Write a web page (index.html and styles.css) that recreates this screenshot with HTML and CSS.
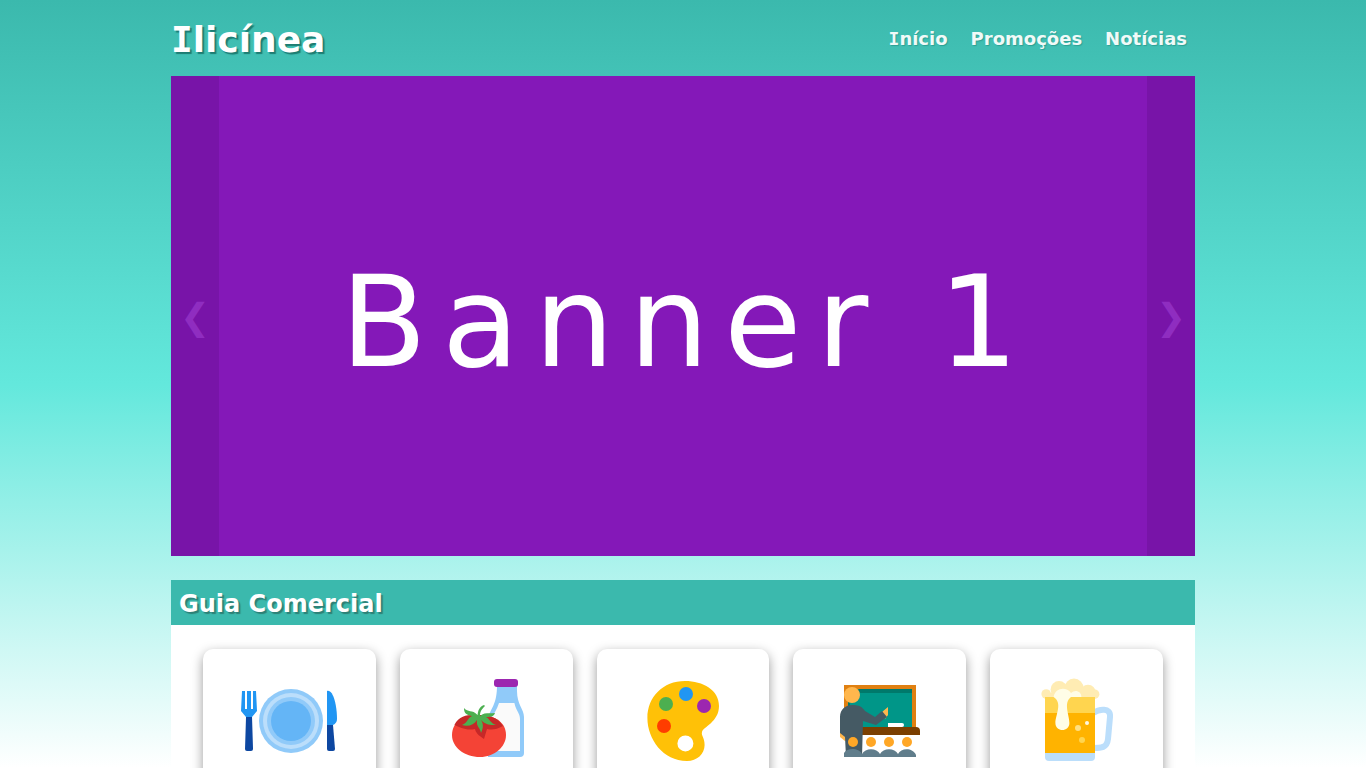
FILE: index.html
```html
<!DOCTYPE html>
<html lang="pt-BR">
<head>
<meta charset="utf-8">
<meta name="viewport" content="width=device-width, initial-scale=1">
<title>Ilicínea</title>
<link rel="stylesheet" href="styles.css">
</head>
<body>
<div class="container">
  <header class="header">
    <h1 class="brand slab-initial">Ilicínea</h1>
    <nav class="nav">
      <a class="nav-link slab-initial" href="#inicio">Início</a>
      <a class="nav-link" href="#promocoes">Promoções</a>
      <a class="nav-link" href="#noticias">Notícias</a>
    </nav>
  </header>

  <main>
    <section class="carousel" aria-label="Banners">
      <button class="arrow" type="button" aria-label="Anterior">❮</button>
      <p class="slide">Banner 1</p>
      <button class="arrow" type="button" aria-label="Próximo">❯</button>
    </section>

    <section class="guide">
      <h2 class="guide-title">Guia Comercial</h2>
      <div class="cards">
        <a class="card" href="#restaurantes" aria-label="Restaurantes">
          <svg class="icon" viewBox="0 0 48 48">
            <circle cx="25" cy="24" r="16" fill="#90caf9"/>
            <circle cx="25" cy="24" r="14" fill="#bbdefb"/>
            <circle cx="25" cy="24" r="12" fill="#90caf9"/>
            <circle cx="25" cy="24" r="10" fill="#64b5f6"/>
            <path fill="#2196f3" d="M.5 9H2L2 18H3V9H5V18H6V9H7.5L8 19 5.500 22H2.500L0 19Z"/>
            <path fill="#0d47a1" d="M2.500 22H5.500L6 38Q6 39 5 39H3Q2 39 2 38Z"/>
            <path fill="#2196f3" d="M43 9C46 8 48 16 48 23Q48 25 46 26H43Z"/>
            <path fill="#0d47a1" d="M43 26H46L47 38Q47 39 46 39H44Q43 39 43 38Z"/>
          </svg>
        </a>
        <a class="card" href="#mercados" aria-label="Mercados">
          <svg class="icon" viewBox="0 0 48 48">
            <path fill="#90caf9" d="M29.500 6H39.500V9C39.500 16 43 18 43 22V40Q43 42 41 42H25V22C27 17 29.500 15 29.500 6Z"/>
            <path fill="#fafafa" d="M30.500 15H38.200C39 19 41 20 41 23V39H25V24C28 21 29.500 18 30.500 15Z"/>
            <rect x="28" y="3" width="12" height="4" rx="1.500" fill="#9c27b0"/>
            <path fill="#f44336" d="M20.500 21C29 21 34 25 34 31C34 37 28 42 21 42C13 42 7 37 7 31C7 25 12 21 20.500 21Z"/>
            <path fill="#c62828" d="M8.200 26C11 20 17 21 20.500 21C25 21 30 22 32.500 26.500Q28 29 24.500 28L23 33C20 31 19 30 18.500 28C14 29 11 27 8.200 26Z"/>
            <path fill="#4caf50" d="M23 16C20.500 17 20 19 19.800 21C17 18 15 20 13 17.500C13 20 14 21 17 21.500C14.500 22.500 15 25 12 26C15 27 18 26 19.500 23.500C19 27 21 27 21.500 30C23 27 22.500 25 21.500 23.500C24 26 26 26 29 26C26 25 26 23 24 22C27 22 28 21.500 28.500 20C26 20.500 23 19.500 21 21.500C21 19 22 18 23.500 16.500Z"/>
          </svg>
        </a>
        <a class="card" href="#artes" aria-label="Artes">
          <svg class="icon" viewBox="0 0 48 48">
            <path fill="#ffc107" fill-rule="evenodd" d="M25 4C14 4 6.200 12 6.200 22.500C6.200 33 14 44 26 44C31 44 34.800 40.500 34.800 36C34.800 32 33 31.500 33.500 29.500C34 27 42 24.500 42 16.500C42 8.500 34 4 25 4ZM25.200 31.200A4 4 0 1 1 25.200 39.200A4 4 0 1 1 25.200 31.200Z"/>
            <circle cx="15.500" cy="15.500" r="3.500" fill="#4caf50"/>
            <circle cx="25.500" cy="10.500" r="3.500" fill="#2196f3"/>
            <circle cx="34.500" cy="16.500" r="3.500" fill="#9c27b0"/>
            <circle cx="14.500" cy="26.500" r="3.500" fill="#ff3d00"/>
          </svg>
        </a>
        <a class="card" href="#escolas" aria-label="Escolas">
          <svg class="icon" viewBox="0 0 48 48">
            <path fill="#e08011" d="M6 6H42V29H6Z"/>
            <path fill="#00796b" d="M8 8H40V27H8Z"/>
            <path fill="#009688" d="M9 10H40V27H9Z"/>
            <path fill="#fff" d="M28 25H35Q36 25 36 26T35 27H28Z"/>
            <path fill="#7b3f00" d="M14 27H42Q44 27 44 29V31H14Z"/>
            <path fill="#ffb74d" d="M4 29 8 33.500 6.500 34 4 32ZM25 19.500 28 17V21L26.500 23Z"/>
            <path fill="#455a64" d="M4 22C4 18 7 16 10 16C14 16 15 17 16.500 19L21.500 22 25 19 27.500 22 22 26 15.500 24L15 42H7L6.500 32 4 30Z"/>
            <circle cx="10" cy="11" r="4" fill="#ffb74d"/>
            <g fill="#ffa726"><circle cx="10.500" cy="34.500" r="2.500"/><circle cx="19.500" cy="34.500" r="2.500"/><circle cx="28.500" cy="34.500" r="2.500"/><circle cx="37.500" cy="34.500" r="2.500"/></g>
            <path fill="#607d8b" d="M6 42V40C7.500 37.300 13.500 37.300 15 40.500C16.500 37.300 22.500 37.300 24 40.500C25.500 37.300 31.500 37.300 33 40.500C34.500 37.300 40.500 37.300 42 41V42Z"/>
          </svg>
        </a>
        <a class="card" href="#bares" aria-label="Bares">
          <svg class="icon" viewBox="0 0 48 48">
            <path d="M32 20C35 18 41 17 40.500 22L39.500 33C39 37.500 36 37.500 32 37.500" fill="none" stroke="#bbdefb" stroke-width="3"/>
            <g fill="#ffecb3">
              <circle cx="8.600" cy="10.500" r="2.400"/>
              <circle cx="15" cy="8.200" r="4.200"/>
              <circle cx="22.500" cy="7.600" r="4.800"/>
              <circle cx="29.500" cy="9.800" r="3.900"/>
              <circle cx="32.800" cy="10.600" r="2.400"/>
              <path d="M8.500 10H33V13H8.500Z"/>
            </g>
            <path fill="#ffb300" d="M8 12H33V40H8Z"/>
            <path fill="#ffd54f" d="M8 12H33V20H8Z"/>
            <path fill="#bbdefb" d="M8 40H33V42Q33 44 31 44H10Q8 44 8 42Z"/>
            <path fill="#fffde7" d="M12.300 12C13 7.500 18.500 6.500 21 10C23 8 26.200 9 26.200 12H21C17 15 20.200 21 20.200 25C20.200 29.700 13.200 29.700 13.200 25C13.200 21 17 15 12.300 12Z"/>
            <circle cx="24.500" cy="27.500" r="1.500" fill="#ffe082"/>
            <circle cx="29" cy="25" r="1" fill="#fff8e1"/>
            <circle cx="26.500" cy="33.500" r="1.500" fill="#ffd54f"/>
          </svg>
        </a>
      </div>
    </section>
  </main>
</div>
</body>
</html>
```
FILE: styles.css
```css
* { box-sizing: border-box; margin: 0; padding: 0; }

body {
  font-family: Verdana, "DejaVu Sans", sans-serif;
  background: linear-gradient(#3bb9ad, #63e8dc 50%, #fff) fixed;
}

.container { max-width: 1024px; margin: 0 auto; }

.header {
  display: flex;
  align-items: center;
  justify-content: space-between;
  min-height: 76px;
}

.brand {
  padding-top: 2px;
  color: #fff;
  font-size: 36px;
  text-shadow: 2px 2px 1px #1d7c72;
}

/* Gives a capital I its serifs */
.slab-initial::first-letter { font-family: Verdana, "DejaVu Sans Mono", monospace; }

.nav { display: flex; gap: 7px; }

.nav-link {
  padding: 8px;
  color: #f0faf8;
  font-size: 18px;
  font-weight: bold;
  text-decoration: none;
  text-shadow: 1px 1px 1px #2d9f94;
}

.carousel {
  display: flex;
  min-height: 480px;
  background: #8418b8;
}

.arrow {
  width: 48px;
  border: 0;
  background: #7814a8;
  color: #8f2dc0;
  font: 36px "DejaVu Sans", sans-serif;
}

.slide {
  flex: 1;
  align-self: center;
  padding: 14px 0 0 8px;
  color: #fff;
  font-size: 126px;
  letter-spacing: 15px;
  line-height: 1;
  text-align: center;
  white-space: nowrap;
}

.guide { margin-top: 24px; background: #fff; }

.guide-title {
  padding: 10px 8px 6px;
  background: #3bb9ad;
  color: #fff;
  font-size: 24px;
  line-height: 29px;
  text-shadow: 2px 2px 1px #2d8076;
}

.cards {
  display: grid;
  grid-template-columns: repeat(5, 1fr);
  gap: 24px;
  padding: 24px 32px;
}

.card {
  display: flex;
  justify-content: center;
  min-height: 160px;
  padding: 24px;
  border-radius: 10px;
  background: #fff;
  box-shadow: 0 4px 12px rgba(0, 0, 0, .4);
}

.icon { width: 96px; height: 96px; }
```
